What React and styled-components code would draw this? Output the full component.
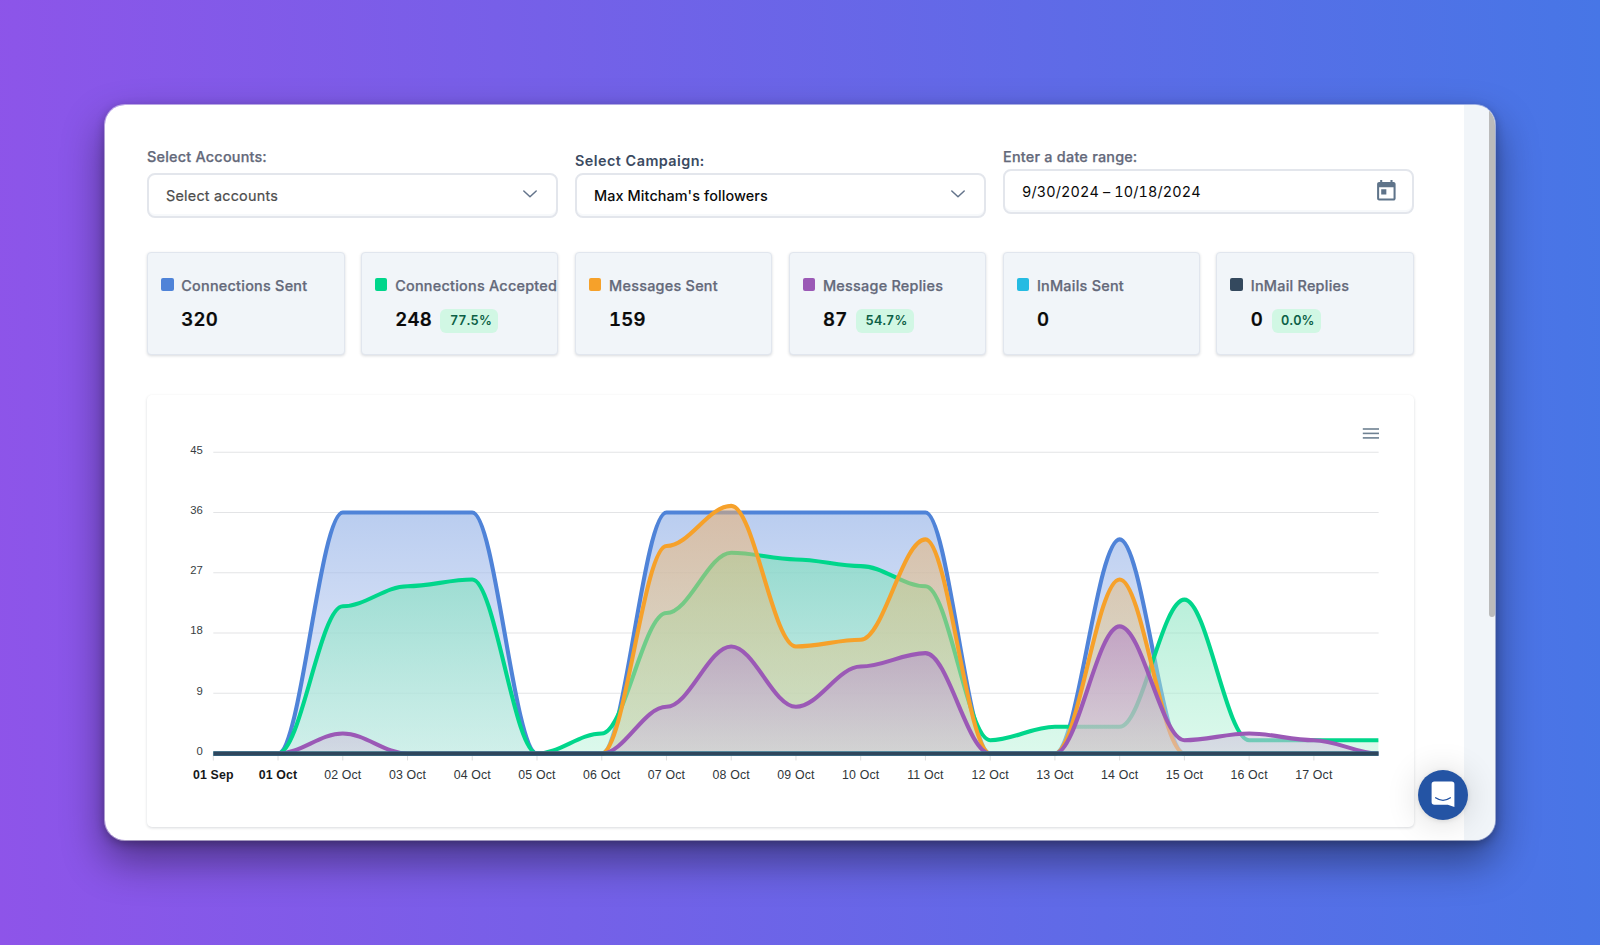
import React from "react";
import styled, { createGlobalStyle } from "styled-components";
import { MdToday } from "react-icons/md";

const stats = [
  { label: "Connections Sent", value: "320", color: "#4f83d8" },
  { label: "Connections Accepted", value: "248", rate: "77.5%", color: "#00d68b" },
  { label: "Messages Sent", value: "159", color: "#f6a12a" },
  { label: "Message Replies", value: "87", rate: "54.7%", color: "#9b59b6" },
  { label: "InMails Sent", value: "0", color: "#25bbe2" },
  { label: "InMail Replies", value: "0", rate: "0.0%", color: "#34495e" },
];

const days = [
  "01 Sep", "01 Oct", "02 Oct", "03 Oct", "04 Oct", "05 Oct", "06 Oct", "07 Oct", "08 Oct",
  "09 Oct", "10 Oct", "11 Oct", "12 Oct", "13 Oct", "14 Oct", "15 Oct", "16 Oct", "17 Oct",
];

const zeros = Array(19).fill(0);

const series = [
  {
    id: "sent",
    color: "#4f83d8",
    from: "#94b2e7",
    to: "#ced9f6",
    opacity: [0.65, 0.5],
    data: [0, 0, 36, 36, 36, 0, 0, 36, 36, 36, 36, 36, 0, 0, 32, 0, 0, 0, 0],
  },
  {
    id: "accepted",
    color: "#00d68b",
    from: "#78dfb8",
    to: "#b9f3d9",
    opacity: [0.6, 0.5],
    data: [0, 0, 22, 25, 26, 0, 3, 21, 30, 29, 28, 25, 2, 4, 4, 23, 2, 2, 2],
  },
  {
    id: "messages",
    color: "#f6a12a",
    from: "#f0b06c",
    to: "#d2d29c",
    opacity: [0.54, 0.46],
    data: [0, 0, 0, 0, 0, 0, 0, 31, 37, 16, 17, 32, 0, 0, 26, 0, 0, 0, 0],
  },
  {
    id: "replies",
    color: "#9b59b6",
    from: "#ae7cca",
    to: "#d4c8de",
    opacity: [0.52, 0.55],
    data: [0, 0, 3, 0, 0, 0, 0, 7, 16, 7, 13, 15, 0, 0, 19, 2, 3, 2, 0],
  },
  { id: "inmails", color: "#25bbe2", data: zeros },
  { id: "inmailReplies", color: "#2f465c", data: zeros },
];

const LEFT = 66.3;
const STEP = 64.74;
const RIGHT = LEFT + STEP * 18;
const TOP = 57.3;
const BOTTOM = 358.6;
const UNIT = (BOTTOM - TOP) / 45;

const px = (i) => LEFT + i * STEP;
const py = (v) => BOTTOM - v * UNIT;

// every control point stays level with its own data point
const linePath = (data) =>
  data.reduce((d, v, i) => {
    if (i === 0) return `M${px(0)},${py(v)}`;
    const bend = STEP * 0.35;
    return `${d} C${px(i - 1) + bend},${py(data[i - 1])} ${px(i) - bend},${py(v)} ${px(i)},${py(v)}`;
  }, "");

const areaPath = (data) => `${linePath(data)} L${RIGHT},${BOTTOM} L${LEFT},${BOTTOM} Z`;

const Chevron = () => (
  <svg width="16" height="10" viewBox="0 0 16 10" fill="none">
    <path d="M1.8 2 L8 7.8 L14.2 2" stroke="#64748b" strokeWidth="1.5" strokeLinecap="round" strokeLinejoin="round" />
  </svg>
);

const Chart = () => (
  <ChartSvg viewBox="0 0 1267 432">
    <defs>
      {series.filter((s) => s.from).map((s) => (
        <linearGradient key={s.id} id={`fill-${s.id}`} x1="0" y1="0" x2="0" y2="1">
          <stop offset="0" stopColor={s.from} stopOpacity={s.opacity[0]} />
          <stop offset="1" stopColor={s.to} stopOpacity={s.opacity[1]} />
        </linearGradient>
      ))}
      <clipPath id="plot">
        <rect x={LEFT} y="20" width={RIGHT - LEFT} height="360" />
      </clipPath>
    </defs>

    {[45, 36, 27, 18, 9, 0].map((v) => (
      <g key={v}>
        <line x1={LEFT} x2={RIGHT} y1={py(v)} y2={py(v)} stroke="#e3e4e6" strokeWidth="1.03" />
        <YLabel x="55.9" y={py(v) + 1.2}>{v}</YLabel>
      </g>
    ))}

    {days.map((day, i) => (
      <g key={day}>
        <line x1={px(i)} x2={px(i)} y1={BOTTOM} y2={BOTTOM + 7} stroke="#e0e0e0" strokeWidth="1.03" />
        <XLabel x={px(i)} y="384.2" $bold={i < 2}>{day}</XLabel>
      </g>
    ))}

    <g clipPath="url(#plot)">
      {series.map((s) => (
        <g key={s.id}>
          {s.from && <path d={areaPath(s.data)} fill={`url(#fill-${s.id})`} />}
          <path d={linePath(s.data)} fill="none" stroke={s.color} strokeWidth="4.1" />
        </g>
      ))}
    </g>

    <g stroke="#6e8192" strokeWidth="1.6">
      <line x1="1215.8" x2="1232" y1="34" y2="34" />
      <line x1="1215.8" x2="1232" y1="38.4" y2="38.4" />
      <line x1="1215.8" x2="1232" y1="42.9" y2="42.9" />
    </g>
  </ChartSvg>
);

const App = () => {
  return (
    <>
      <GlobalStyle />
      <Page>
        <Window>
          <Content>
            <Filters>
              <Field>
                <Label>Select Accounts:</Label>
                <SelectBox $muted $gap={6}>
                  <span>Select accounts</span>
                  <Chevron />
                </SelectBox>
              </Field>
              <Field $offset={4}>
                <Label $dark>Select Campaign:</Label>
                <SelectBox $gap={2} $medium>
                  <span>Max Mitcham's followers</span>
                  <Chevron />
                </SelectBox>
              </Field>
              <Field>
                <Label>Enter a date range:</Label>
                <DateBox $gap={2}>
                  <span>9/30/2024 – 10/18/2024</span>
                  <MdToday size={24.7} color="#5f748a" />
                </DateBox>
              </Field>
            </Filters>

            <Stats>
              {stats.map((s) => (
                <StatCard key={s.label}>
                  <StatHead>
                    <Swatch $color={s.color} />
                    {s.label}
                  </StatHead>
                  <StatBody>
                    <StatValue>{s.value}</StatValue>
                    {s.rate && <Rate>{s.rate}</Rate>}
                  </StatBody>
                </StatCard>
              ))}
            </Stats>

            <ChartCard>
              <Chart />
            </ChartCard>
          </Content>
          <Gutter />
          <ScrollTrack>
            <ScrollThumb />
          </ScrollTrack>
          <ChatButton>
            <svg width="24" height="27" viewBox="0 0 24 27">
              <path d="M3.4 0.6 H20.6 Q23.4 0.6 23.4 3.4 V26 L16.8 23.8 H3.4 Q0.6 23.8 0.6 21 V3.4 Q0.6 0.6 3.4 0.6 Z" fill="#fff" />
              <path d="M4.6 16.8 Q12 22 19.4 16.8" fill="none" stroke="#2454a4" strokeWidth="1.3" strokeLinecap="round" />
            </svg>
          </ChatButton>
        </Window>
      </Page>
    </>
  );
};

const GlobalStyle = createGlobalStyle`
  * {
    box-sizing: border-box;
  }
  body {
    margin: 0;
    font-family: Inter, "Liberation Sans", sans-serif;
    font-variant-numeric: tabular-nums;
  }
`;

const Page = styled.div`
  display: flex;
  align-items: center;
  justify-content: center;
  width: 1600px;
  height: 945px;
  overflow: hidden;
  background: linear-gradient(88deg, #8e54e9, #4776e6);
`;

const Window = styled.div`
  position: relative;
  display: flex;
  width: 1392px;
  height: 737px;
  overflow: hidden;
  border: 1px solid rgba(255, 255, 255, 0.5);
  border-radius: 21px;
  background: #fff;
  background-clip: padding-box;
  box-shadow: 0 20px 42px rgba(0, 0, 0, 0.42), 0 3px 10px rgba(0, 0, 0, 0.25);
`;

const Content = styled.main`
  width: 1359px;
  padding: 42px 50px 0 42px;
`;

const Filters = styled.div`
  display: grid;
  grid-template-columns: repeat(3, 1fr);
  column-gap: 17px;
  height: 71.5px;
`;

const Field = styled.div`
  padding-top: ${(p) => p.$offset || 0}px;
`;

const Label = styled.div`
  line-height: 20px;
  font-size: 14.4px;
  font-weight: ${(p) => (p.$dark ? 600 : 500)};
  letter-spacing: ${(p) => (p.$dark ? 0.45 : 0.23)}px;
  color: ${(p) => (p.$dark ? "#3b4a61" : "#64697a")};
  -webkit-text-stroke: ${(p) => (p.$dark ? 0 : 0.25)}px;
`;

const SelectBox = styled.div`
  display: flex;
  align-items: center;
  justify-content: space-between;
  height: 45px;
  margin-top: ${(p) => p.$gap}px;
  padding: 0 18px 0 17px;
  border: 2px solid #e3e6ec;
  border-radius: 8px;
  box-shadow: inset 0 -2px 0 #f7f9fb;
  font-size: 14.4px;
  font-weight: ${(p) => (p.$medium ? 500 : 400)};
  letter-spacing: ${(p) => (p.$medium ? 0.1 : 0.23)}px;
  color: ${(p) => (p.$muted ? "#4d4d4d" : "#0a0a0a")};
  -webkit-text-stroke: ${(p) => (p.$muted ? 0.2 : 0)}px;

  svg {
    margin-top: -3px;
  }
`;

const DateBox = styled(SelectBox)`
  padding-right: 13px;
  letter-spacing: 0.14px;

  svg {
    margin-top: 0;
  }
`;

const Stats = styled.div`
  display: grid;
  grid-template-columns: repeat(6, 1fr);
  column-gap: 16.4px;
  margin-top: 33.5px;
`;

const StatCard = styled.div`
  height: 103px;
  padding: 22.5px 0 0 13px;
  overflow: hidden;
  border: 1px solid #e1e6ee;
  border-radius: 4px;
  background: #f1f5f9;
  box-shadow: 0 1px 3px rgba(15, 23, 42, 0.16);
`;

const StatHead = styled.div`
  display: flex;
  align-items: center;
  line-height: 20px;
  white-space: nowrap;
  font-size: 14.4px;
  font-weight: 500;
  letter-spacing: 0.25px;
  color: #64697a;
  -webkit-text-stroke: 0.25px;
`;

const Swatch = styled.span`
  flex: none;
  width: 12.5px;
  height: 13px;
  margin: -2px 7.8px 0 0;
  border-radius: 2px;
  background: ${(p) => p.$color};
`;

const StatBody = styled.div`
  display: flex;
  align-items: flex-start;
  padding: 10px 0 0 20.3px;
`;

const StatValue = styled.div`
  line-height: 26px;
  font-size: 18.6px;
  font-weight: 600;
  letter-spacing: 0.2px;
  color: #0a0a0a;
  -webkit-text-stroke: 0.2px;
`;

const Rate = styled.div`
  height: 24.5px;
  margin: 3px 0 0 8.5px;
  padding: 0 6.3px 0 9.5px;
  border-radius: 6px;
  background: #d1f7e4;
  line-height: 24.5px;
  font-size: 12.8px;
  font-weight: 600;
  letter-spacing: 0.2px;
  color: #0c5f46;
`;

const ChartCard = styled.div`
  height: 432px;
  margin-top: 40px;
  border-radius: 5px;
  background: #fff;
  box-shadow: 0 1px 3px rgba(15, 23, 42, 0.16);
`;

const ChartSvg = styled.svg`
  display: block;
  width: 1267px;
  height: 432px;
`;

const YLabel = styled.text`
  font-family: "Liberation Sans", Arial, sans-serif;
  font-size: 11.3px;
  text-anchor: end;
  fill: #373d3f;
`;

const XLabel = styled.text`
  font-family: "Liberation Sans", Arial, sans-serif;
  font-size: 12.35px;
  font-weight: ${(p) => (p.$bold ? 700 : 400)};
  letter-spacing: 0.15px;
  text-anchor: middle;
  fill: ${(p) => (p.$bold ? "#15181a" : "#30363a")};
`;

const Gutter = styled.div`
  width: 25px;
  background: #f1f5f9;
`;

const ScrollTrack = styled.div`
  width: 6px;
  background: #f1f5f9;
`;

const ScrollThumb = styled.div`
  height: 512px;
  border-radius: 0 0 3px 3px;
  background: #bbb;
`;

const ChatButton = styled.button`
  position: absolute;
  right: 27px;
  bottom: 20.5px;
  display: flex;
  align-items: center;
  justify-content: center;
  width: 50px;
  height: 50px;
  padding: 0;
  border: 0;
  border-radius: 50%;
  background: #2454a4;
  box-shadow: 0 1px 5px rgba(0, 0, 0, 0.1), 0 2px 34px rgba(0, 0, 0, 0.16);
`;

export default App;
